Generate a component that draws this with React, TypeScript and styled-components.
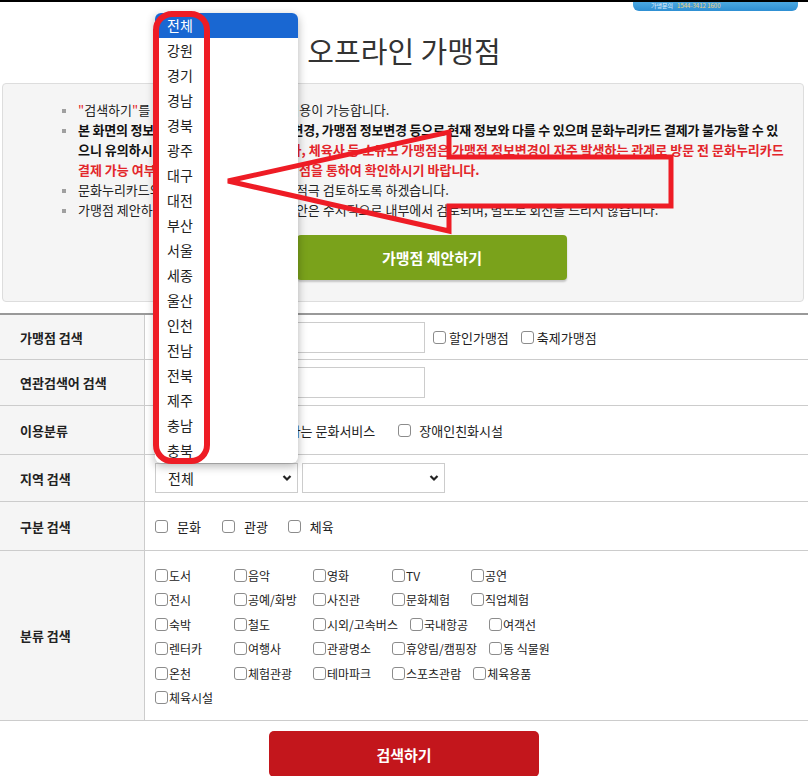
import React from "react";
import styled, { createGlobalStyle } from "styled-components";

const GlobalStyle = createGlobalStyle`
  html, body {
    margin: 0;
    padding: 0;
    background: #fff;
  }
  body {
    font-family: "Noto Sans CJK KR", "Noto Sans", sans-serif;
    color: #222;
  }
  * {
    box-sizing: border-box;
  }
`;

const Page = styled.div`
  position: relative;
  width: 808px;
  height: 776px;
  overflow: hidden;
`;

const Header = styled.header`
  display: flex;
  flex-direction: column;
  height: 83px;
  border-top: 2px solid #000;
`;

const BannerRow = styled.div`
  display: flex;
  justify-content: flex-end;
  padding-right: 10px;
`;

const Banner = styled.div`
  width: 165px;
  height: 9px;
  padding-left: 18px;
  border-radius: 0 0 6px 6px;
  background: linear-gradient(#4ba8e2, #2e8fd3);
  color: #e6f2ff;
  font-size: 6px;
  line-height: 8px;
  white-space: nowrap;

  & b {
    margin-left: 4px;
    color: #f1d27c;
    font-weight: 400;
  }
`;

const Title = styled.h1`
  margin: 19px 0 0;
  text-align: center;
  font-size: 29px;
  font-weight: 400;
  line-height: 40px;
  color: #333;
`;

const InfoBox = styled.section`
  height: 219px;
  margin: 0 4px 0 2px;
  padding-top: 16px;
  border: 1px solid #ddd;
  border-radius: 4px;
  background: #f5f5f5;
`;

const NoticeList = styled.ul`
  margin: 0;
  padding: 0 8px 0 75px;
  list-style: none;
  font-size: 13px;
  line-height: 20px;
  color: #222;
`;

const Notice = styled.li`
  position: relative;
  white-space: nowrap;

  &::before {
    content: "";
    position: absolute;
    left: -16px;
    top: 9px;
    width: 4px;
    height: 4px;
    background: #a0a0a0;
  }
`;

const Strong = styled.strong`
  font-weight: 700;
  color: #111;
`;

const Tight = styled.span`
  letter-spacing: -0.2px;
`;

const Red = styled.span`
  color: #e3262b;
`;

const ProposeButton = styled.button`
  display: block;
  width: 270px;
  height: 45px;
  margin: 15px 0 0 294px;
  border: 0;
  border-radius: 4px;
  background: #7aa21b;
  box-shadow: 0 2px 2px rgba(0, 0, 0, 0.2);
  color: #fff;
  font-family: inherit;
  font-size: 15px;
  font-weight: 700;
`;

const SearchTable = styled.div`
  margin-top: 11px;
  border-top: 2px solid #999;
`;

const Row = styled.div<{ $h: number }>`
  display: grid;
  grid-template-columns: 145px 1fr;
  min-height: ${(p) => p.$h}px;
  border-bottom: 1px solid #ccc;
`;

const Label = styled.div`
  display: flex;
  align-items: center;
  padding-left: 20px;
  border-right: 1px solid #ccc;
  background: #f5f5f5;
  font-size: 13px;
  font-weight: 700;
  color: #222;
`;

const Cell = styled.div`
  display: flex;
  align-items: center;
  padding-left: 10px;
  font-size: 13px;
`;

const TextInput = styled.input`
  width: 270px;
  height: 31px;
  margin: 0;
  border: 1px solid #ccc;
  background: #fff;
  font-family: inherit;
`;

const Check = styled.label<{ $gap: number; $ml?: number }>`
  display: inline-flex;
  align-items: center;
  gap: ${(p) => p.$gap}px;
  margin-left: ${(p) => p.$ml ?? 0}px;
  color: #222;
  white-space: nowrap;
`;

const Box = styled.input.attrs({ type: "checkbox" })`
  appearance: none;
  width: 13px;
  height: 13px;
  margin: 0;
  border: 1px solid #8c8c8c;
  border-radius: 3px;
  background: #fff;
  flex: none;
`;

const SelectBox = styled.div<{ $ml?: number }>`
  display: flex;
  align-items: center;
  justify-content: space-between;
  width: 143px;
  height: 30px;
  margin-left: ${(p) => p.$ml ?? 0}px;
  padding: 0 5px 0 12px;
  border: 1px solid #ccc;
  background: #fff;
  font-size: 14px;
  color: #222;
`;

const CategoryGrid = styled.div`
  display: flex;
  flex-direction: column;
  padding: 12px 0 10px 10px;
  font-size: 12px;
`;

const CategoryRow = styled.div`
  display: flex;
  height: 24.5px;
  align-items: center;
`;

const CategoryItem = styled.label`
  display: inline-flex;
  align-items: center;
  gap: 1px;
  min-width: 79px;
  padding-right: 12px;
  white-space: nowrap;
`;

const SearchButton = styled.button`
  display: block;
  width: 270px;
  height: 46px;
  margin: 10px auto 0;
  border: 0;
  border-radius: 5px;
  background: #c3161c;
  color: #fff;
  font-family: inherit;
  font-size: 15px;
  font-weight: 700;
`;

const Listbox = styled.ul`
  position: absolute;
  left: 155px;
  top: 13px;
  width: 143px;
  margin: 0;
  padding: 0;
  list-style: none;
  border-radius: 6px;
  overflow: hidden;
  background: #fff;
  box-shadow: 0 3px 10px rgba(0, 0, 0, 0.3);
`;

const Option = styled.li<{ $selected?: boolean }>`
  height: 25px;
  padding-left: 12px;
  line-height: 25px;
  font-size: 14px;
  color: ${(p) => (p.$selected ? "#fff" : "#222")};
  background: ${(p) => (p.$selected ? "#1967d2" : "transparent")};
`;

const Annotation = styled.svg`
  position: absolute;
  left: 0;
  top: 0;
  pointer-events: none;
`;

const regions = [
  "전체", "강원", "경기", "경남", "경북", "광주", "대구", "대전", "부산",
  "서울", "세종", "울산", "인천", "전남", "전북", "제주", "충남", "충북",
];

const categories = [
  ["도서", "음악", "영화", "TV", "공연"],
  ["전시", "공예/화방", "사진관", "문화체험", "직업체험"],
  ["숙박", "철도", "시외/고속버스", "국내항공", "여객선"],
  ["렌터카", "여행사", "관광명소", "휴양림/캠핑장", "동 식물원"],
  ["온천", "체험관광", "테마파크", "스포츠관람", "체육용품"],
  ["체육시설"],
];

const Chevron = () => (
  <svg width="10" height="8" viewBox="0 0 10 8">
    <polyline points="1.5,2 5,5.5 8.5,2" fill="none" stroke="#222" strokeWidth="2.2" />
  </svg>
);

export default function App() {
  return (
    <Page>
      <GlobalStyle />
      <Header>
        <BannerRow>
          <Banner>
            가맹문의<b>1544-3412 1600</b>
          </Banner>
        </BannerRow>
        <Title>오프라인 가맹점</Title>
      </Header>

      <InfoBox>
        <NoticeList>
          <Notice>
            <Red>"</Red>검색하기<Red>"</Red>를 통해 가맹점 검색 및 정보 이용이 가능합니다.
          </Notice>
          <Notice>
            <Strong>
              <Tight>
                본 화면의 정보는 가맹점의 휴·폐업, 업종변경, 가맹점 정보변경 등으로 현재 정보와 다를 수 있으며 문화누리카드 결제가 불가능할 수 있
              </Tight>
              <br />
              으니 유의하시기 바랍니다.{" "}
              <Red>
                안경점, 악기사, 체육사 등 소규모 가맹점은 가맹점 정보변경이 자주 발생하는 관계로 방문 전 문화누리카드
                <br />
                결제 가능 여부를 사전에 반드시 해당 가맹점을 통하여 확인하시기 바랍니다.
              </Red>
            </Strong>
          </Notice>
          <Notice>문화누리카드의 가맹점 확대 요청 시에는 적극 검토하도록 하겠습니다.</Notice>
          <Notice>가맹점 제안하기 메뉴를 통하여 접수된 제안은 수시적으로 내부에서 검토되며, 별도로 회신을 드리지 않습니다.</Notice>
        </NoticeList>
        <ProposeButton>가맹점 제안하기</ProposeButton>
      </InfoBox>

      <SearchTable>
        <Row $h={45}>
          <Label>가맹점 검색</Label>
          <Cell>
            <TextInput />
            <Check $gap={3} $ml={8}>
              <Box />
              할인가맹점
            </Check>
            <Check $gap={3} $ml={12}>
              <Box />
              축제가맹점
            </Check>
          </Cell>
        </Row>
        <Row $h={46}>
          <Label>연관검색어 검색</Label>
          <Cell>
            <TextInput />
          </Cell>
        </Row>
        <Row $h={49}>
          <Label>이용분류</Label>
          <Cell>
            <Check $gap={9}>
              <Box />
              할인 서비스
            </Check>
            <Check $gap={9} $ml={3}>
              <Box />
              찾아가는 문화서비스
            </Check>
            <Check $gap={8} $ml={23}>
              <Box />
              장애인친화시설
            </Check>
          </Cell>
        </Row>
        <Row $h={47}>
          <Label>지역 검색</Label>
          <Cell>
            <SelectBox>
              전체
              <Chevron />
            </SelectBox>
            <SelectBox $ml={4}>
              <span />
              <Chevron />
            </SelectBox>
          </Cell>
        </Row>
        <Row $h={49}>
          <Label>구분 검색</Label>
          <Cell>
            <Check $gap={9}>
              <Box />
              문화
            </Check>
            <Check $gap={9} $ml={21}>
              <Box />
              관광
            </Check>
            <Check $gap={9} $ml={20}>
              <Box />
              체육
            </Check>
          </Cell>
        </Row>
        <Row $h={169}>
          <Label>분류 검색</Label>
          <CategoryGrid>
            {categories.map((row, i) => (
              <CategoryRow key={i}>
                {row.map((name) => (
                  <CategoryItem key={name}>
                    <Box />
                    {name}
                  </CategoryItem>
                ))}
              </CategoryRow>
            ))}
          </CategoryGrid>
        </Row>
      </SearchTable>

      <SearchButton>검색하기</SearchButton>

      <Listbox>
        {regions.map((r, i) => (
          <Option key={r} $selected={i === 0}>
            {r}
          </Option>
        ))}
      </Listbox>

      <Annotation width="808" height="776" viewBox="0 0 808 776">
        <rect x="156" y="14" width="51" height="447" rx="16" fill="none" stroke="#ee1c25" strokeWidth="6" />
        <polygon
          points="228,181 449,132 449,157 671,157 671,206 449,206 449,231"
          fill="none"
          stroke="#ee1c25"
          strokeWidth="5"
          strokeLinejoin="miter"
        />
      </Annotation>
    </Page>
  );
}
